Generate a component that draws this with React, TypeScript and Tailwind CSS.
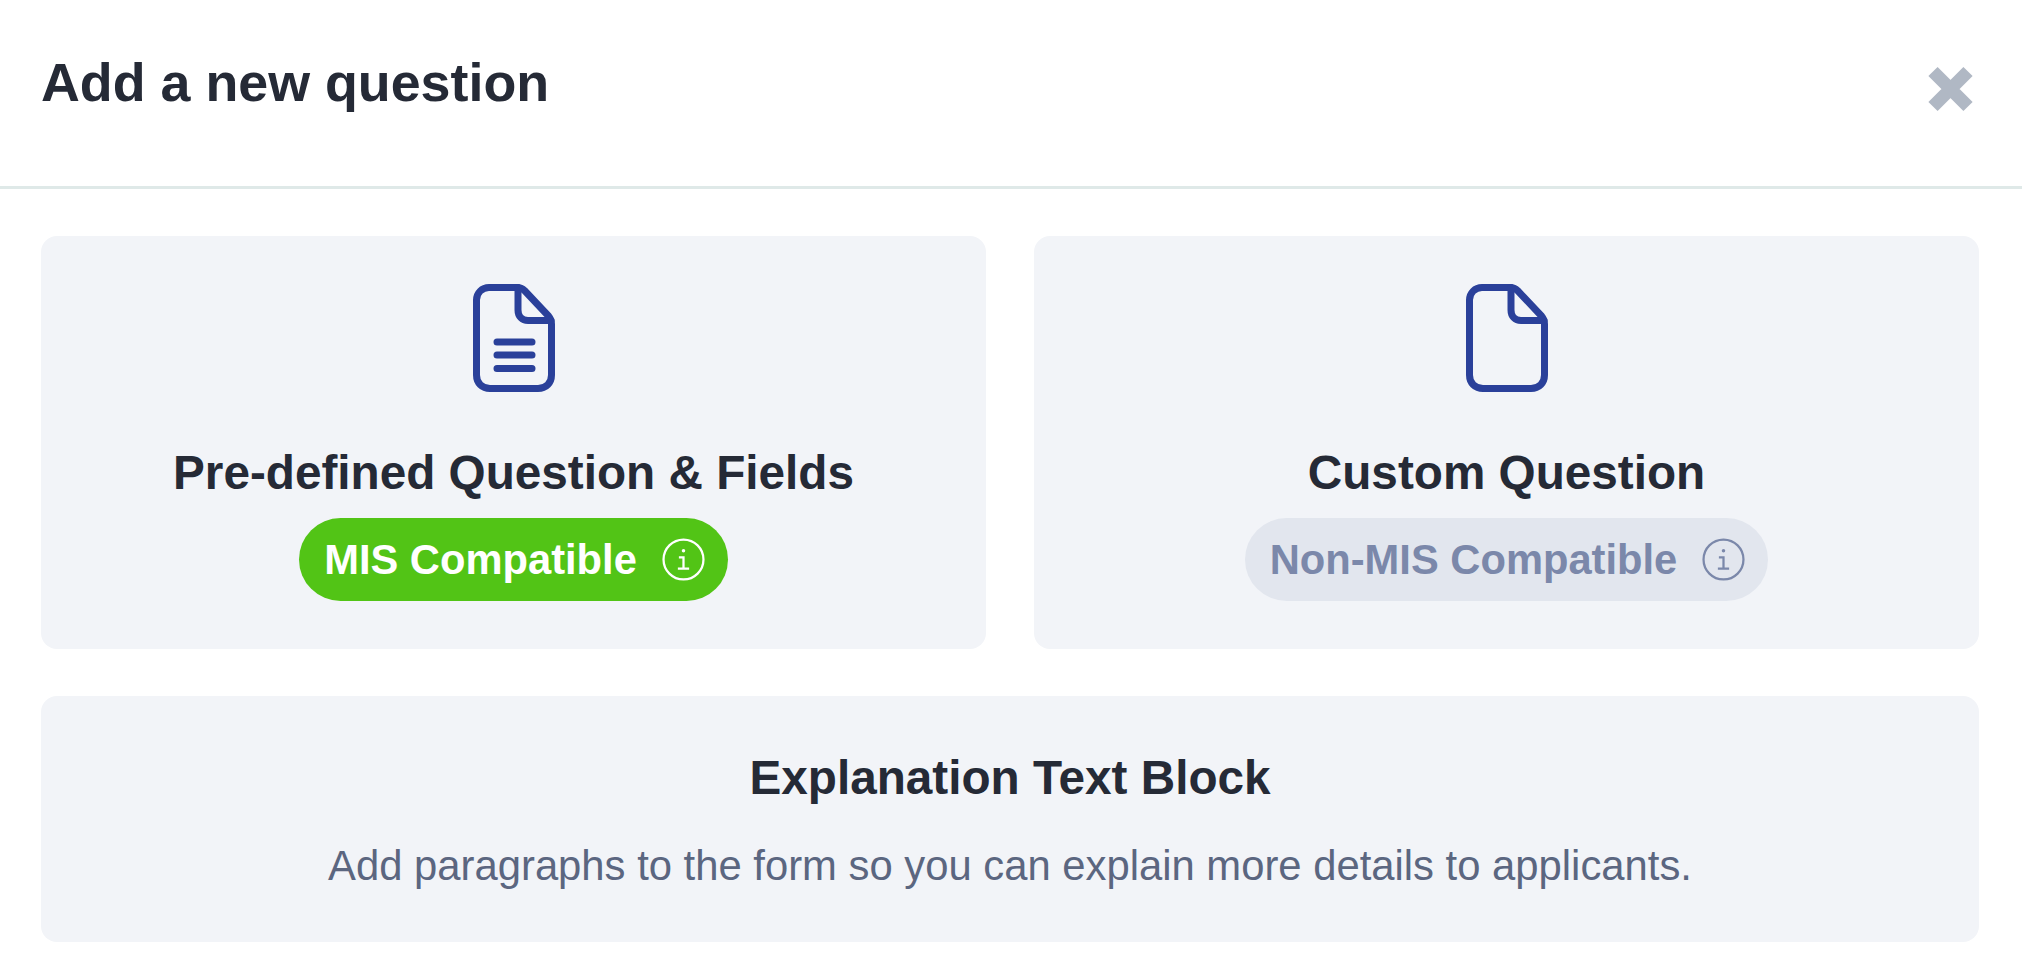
function FileIcon({ lines }: { lines?: boolean }) {
  return (
    <svg width="84" height="110" viewBox="0 0 84 110" fill="none" stroke="#2a409a" strokeWidth="7" strokeLinecap="round" strokeLinejoin="round">
      <path d="M17 4.500H45C48 4.500 50.500 5.500 52.500 7.500L76.500 33C78.500 35.500 79.500 38 79.500 41V92C79.500 100 74 105.500 66 105.500H18C10 105.500 4.500 100 4.500 92V17C4.500 10 10 4.500 17 4.500Z" />
      <path d="M46 4.500V27C46 33.500 50 37.500 56 37.500H79" />
      {lines && <path d="M25 59H60M25 72H60M25 85.500H60" />}
    </svg>
  );
}

function InfoIcon({ color }: { color: string }) {
  return (
    <svg width="43" height="43" viewBox="0 0 42 42" fill="none" stroke={color} strokeWidth="2.2">
      <circle cx="21" cy="21" r="19.500" />
      <path d="M16.500 19H21V30M15.500 30H26.500" />
      <circle cx="21" cy="12.500" r="1.700" fill={color} stroke="none" />
    </svg>
  );
}

export default function App() {
  return (
    <div className="w-[2022px] h-[962px] overflow-hidden bg-white font-['Liberation_Sans',Arial,sans-serif] text-[#252a36]">
      <header className="h-[189px] border-b-[3px] border-[#dfe9e8] pl-[41px] pr-[49px] pt-[49px] flex justify-between items-start">
        <h1 className="text-[53.8px] leading-[66px] font-bold">Add a new question</h1>
        <svg className="mt-[17px]" width="45" height="46" viewBox="0 0 45 46" fill="none" stroke="#b0b8c4" strokeWidth="13">
          <path d="M5 5.500L40 40.500M40 5.500L5 40.500" />
        </svg>
      </header>
      <main className="pl-[41px] pr-[43px] pt-[47px] flex flex-col gap-[47px]">
        <div className="grid grid-cols-2 gap-[48px]">
          <section className="h-[413px] rounded-[16px] bg-[#f2f4f8] flex flex-col items-center pt-[47px]">
            <FileIcon lines />
            <h2 className="mt-[52px] text-[47.7px] leading-[56px] font-bold">Pre-defined Question &amp; Fields</h2>
            <div className="mt-[17px] h-[83px] rounded-full bg-[#52c416] text-white flex items-center pl-[25px] pr-[23px] gap-[25px]">
              <span className="pt-[2px] text-[41.7px] font-bold">MIS Compatible</span>
              <InfoIcon color="#ffffff" />
            </div>
          </section>
          <section className="h-[413px] rounded-[16px] bg-[#f2f4f8] flex flex-col items-center pt-[47px]">
            <FileIcon />
            <h2 className="mt-[52px] text-[47.7px] leading-[56px] font-bold">Custom Question</h2>
            <div className="mt-[17px] h-[83px] rounded-full bg-[#e2e6ee] text-[#7b88aa] flex items-center pl-[25px] pr-[23px] gap-[25px]">
              <span className="pt-[2px] text-[41.7px] font-bold">Non-MIS Compatible</span>
              <InfoIcon color="#7b88aa" />
            </div>
          </section>
        </div>
        <section className="h-[246px] rounded-[16px] bg-[#f2f4f8] flex flex-col items-center pt-[54px]">
          <h2 className="text-[47.7px] leading-[56px] font-bold">Explanation Text Block</h2>
          <p className="mt-[32px] text-[41.8px] leading-[56px] text-[#5b6680]">Add paragraphs to the form so you can explain more details to applicants.</p>
        </section>
      </main>
    </div>
  );
}
